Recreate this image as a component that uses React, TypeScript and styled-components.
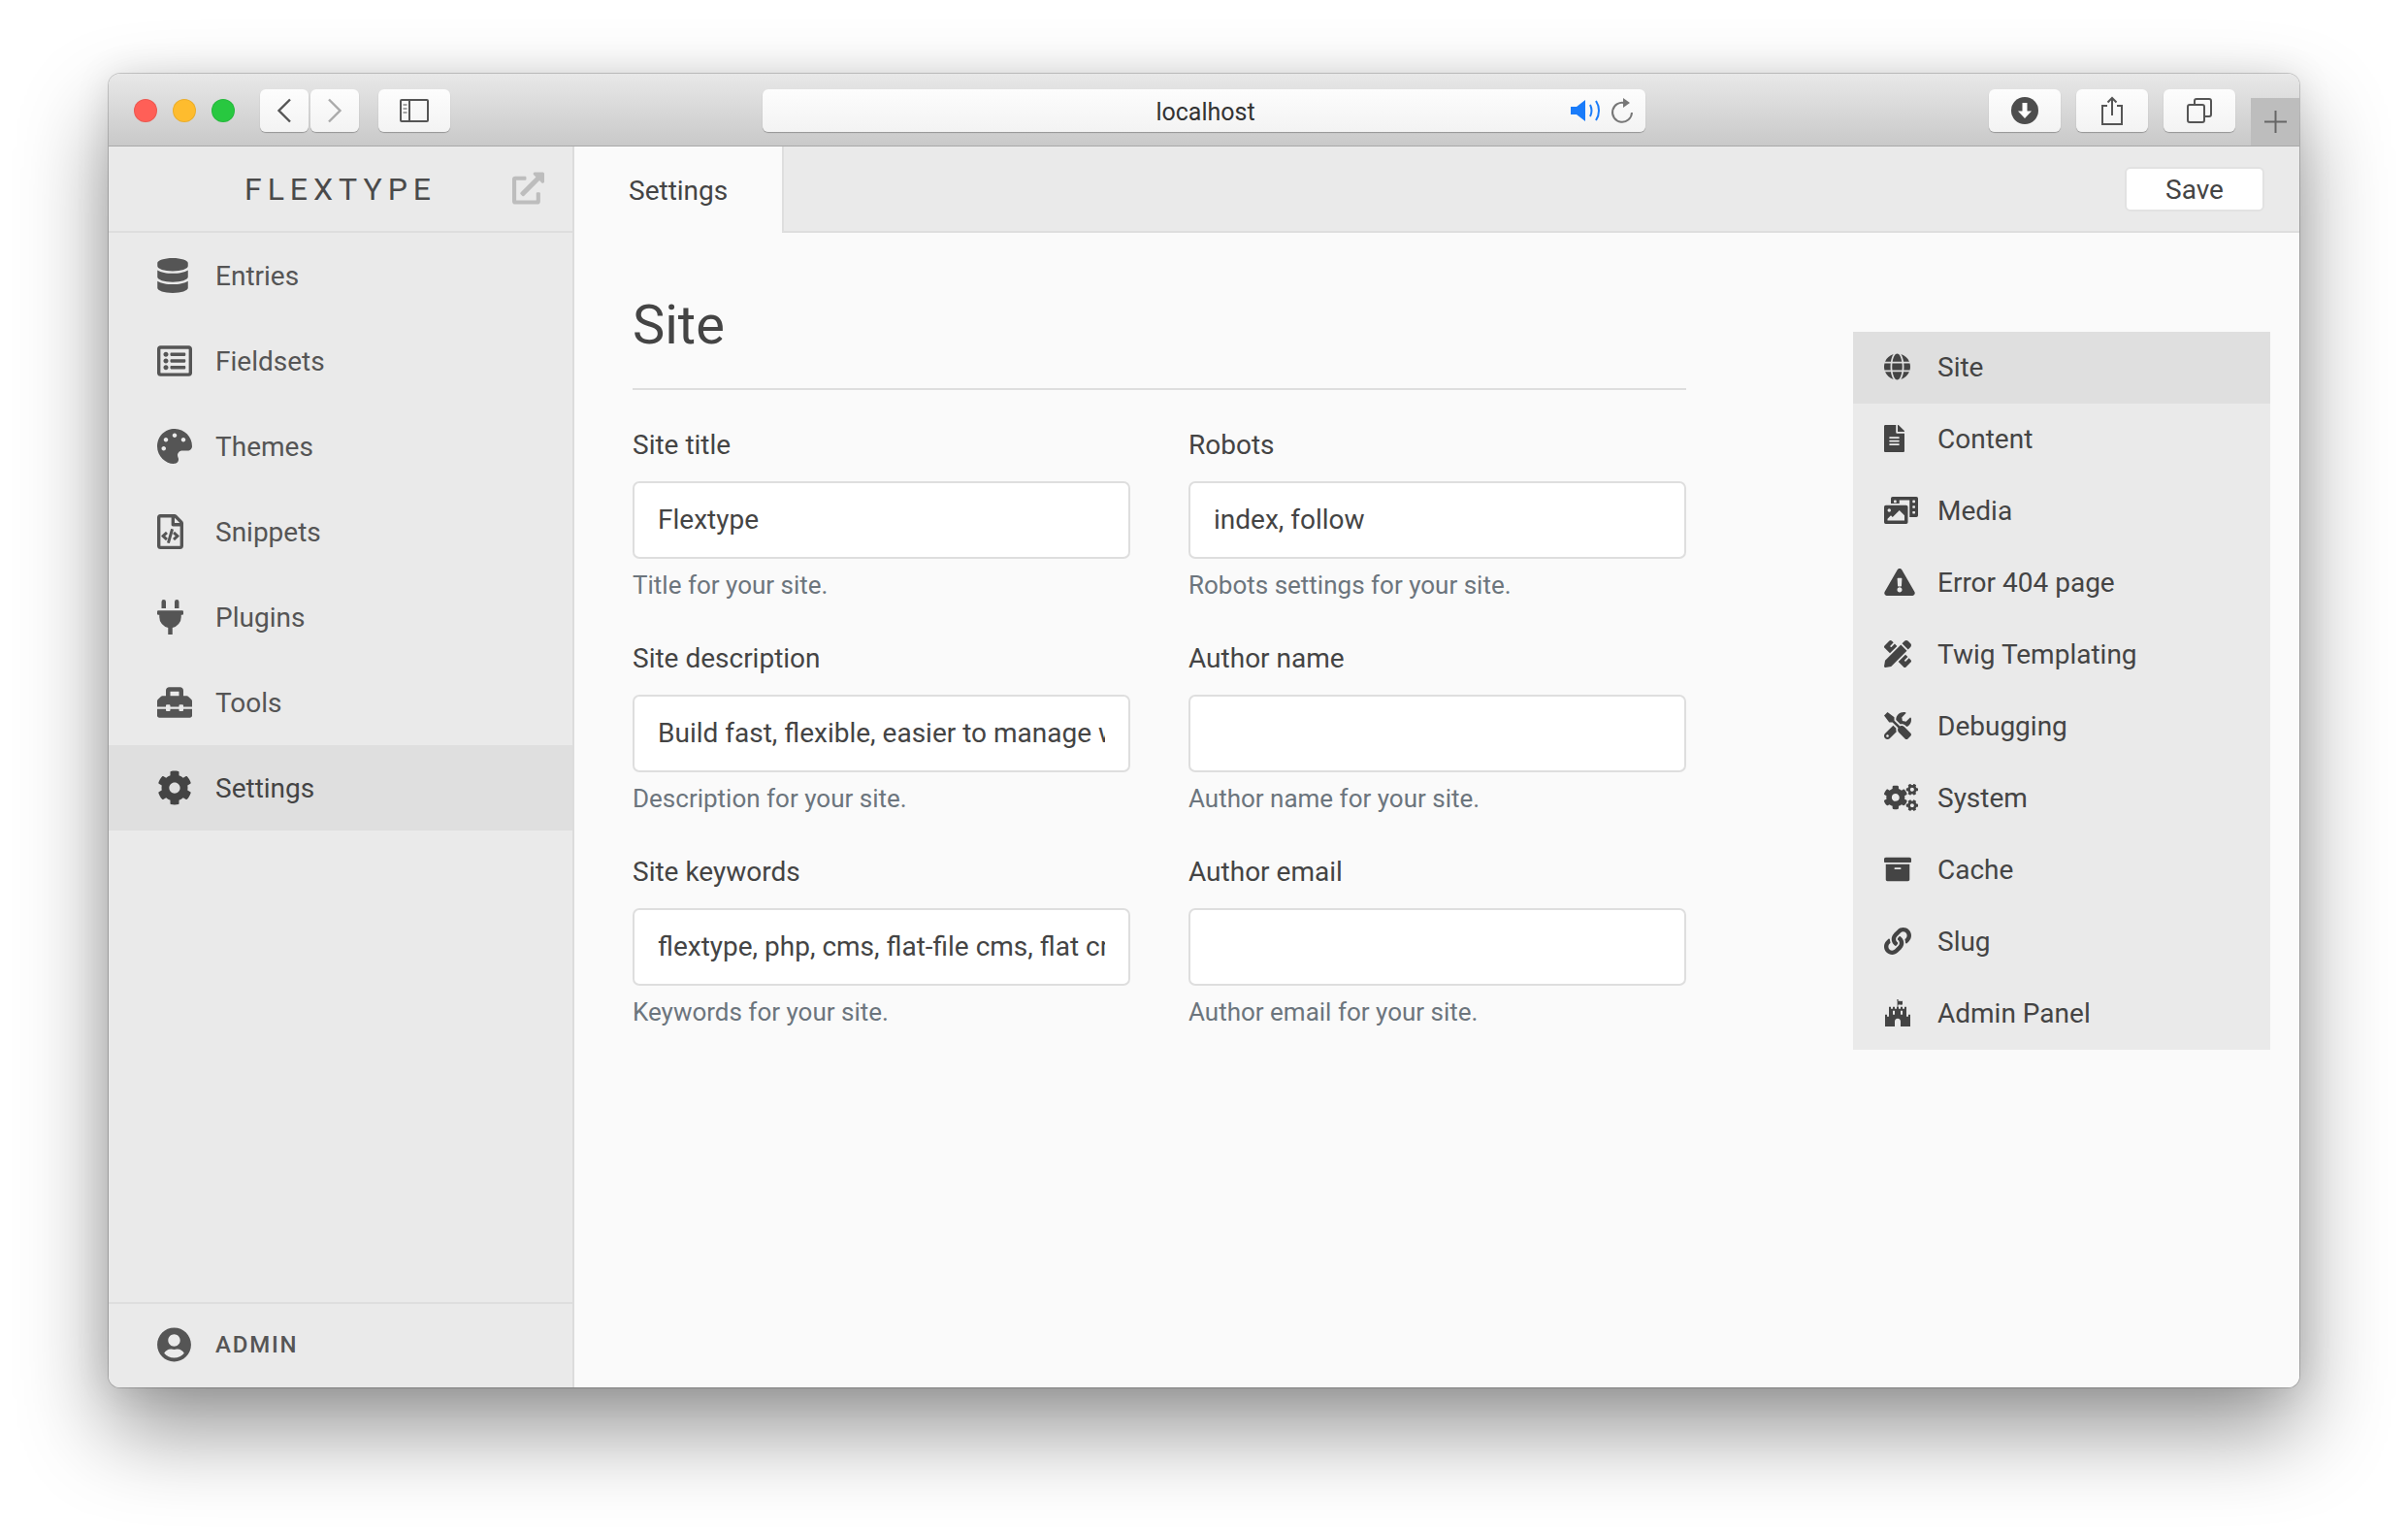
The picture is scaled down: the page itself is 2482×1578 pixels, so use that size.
import styled, { createGlobalStyle } from "styled-components";
import type { ReactNode } from "react";
import {
  FaArchive,
  FaCog,
  FaCogs,
  FaDatabase,
  FaExclamationTriangle,
  FaExternalLinkAlt,
  FaFileAlt,
  FaFortAwesome,
  FaGlobe,
  FaLink,
  FaPalette,
  FaPencilRuler,
  FaPhotoVideo,
  FaPlug,
  FaRegFileCode,
  FaRegListAlt,
  FaToolbox,
  FaTools,
  FaUserCircle,
} from "react-icons/fa";

const GlobalStyle = createGlobalStyle`
  html, body {
    margin: 0;
    padding: 0;
    background: #fff;
  }

  body {
    font-family: Roboto, "Liberation Sans", sans-serif;
  }
`;

// iconWidth: the glyphs are not square and sit flush left in their column
const sidebarItems = [
  { label: "Entries", icon: <FaDatabase />, iconWidth: 32 },
  { label: "Fieldsets", icon: <FaRegListAlt />, iconWidth: 36 },
  { label: "Themes", icon: <FaPalette />, iconWidth: 36 },
  { label: "Snippets", icon: <FaRegFileCode />, iconWidth: 27 },
  { label: "Plugins", icon: <FaPlug />, iconWidth: 27 },
  { label: "Tools", icon: <FaToolbox />, iconWidth: 36 },
  { label: "Settings", icon: <FaCog />, iconWidth: 36, active: true },
];

const sectionItems = [
  { label: "Site", icon: <FaGlobe />, iconWidth: 27, active: true },
  { label: "Content", icon: <FaFileAlt />, iconWidth: 21 },
  { label: "Media", icon: <FaPhotoVideo />, iconWidth: 35 },
  { label: "Error 404 page", icon: <FaExclamationTriangle />, iconWidth: 32 },
  { label: "Twig Templating", icon: <FaPencilRuler />, iconWidth: 28 },
  { label: "Debugging", icon: <FaTools />, iconWidth: 28 },
  { label: "System", icon: <FaCogs />, iconWidth: 35 },
  { label: "Cache", icon: <FaArchive />, iconWidth: 28 },
  { label: "Slug", icon: <FaLink />, iconWidth: 28 },
  { label: "Admin Panel", icon: <FaFortAwesome />, iconWidth: 28 },
];

const leftFields = [
  { label: "Site title", value: "Flextype", help: "Title for your site." },
  {
    label: "Site description",
    value: "Build fast, flexible, easier to manage websites with Flextype.",
    help: "Description for your site.",
  },
  {
    label: "Site keywords",
    value: "flextype, php, cms, flat-file cms, flat cms, flatfile cms, html",
    help: "Keywords for your site.",
  },
];

const rightFields = [
  { label: "Robots", value: "index, follow", help: "Robots settings for your site." },
  { label: "Author name", value: "", help: "Author name for your site." },
  { label: "Author email", value: "", help: "Author email for your site." },
];

function Field({ label, value, help }: { label: string; value: string; help: string }) {
  return (
    <FieldBox>
      <FieldLabel>{label}</FieldLabel>
      <TextInput readOnly value={value} />
      <HelpText>{help}</HelpText>
    </FieldBox>
  );
}

function ChromeButton({ width, children }: { width: number; children: ReactNode }) {
  return <ToolButton $width={width}>{children}</ToolButton>;
}

export default function App() {
  return (
    <>
      <GlobalStyle />
      <Page>
        <Window>
          <TitleBar>
            <Lights>
              <Light $color="#ff5f57" />
              <Light $color="#febc2e" />
              <Light $color="#28c840" />
            </Lights>
            <NavButtons>
              <ChromeButton width={50}>
                <svg width="16" height="26" viewBox="0 0 16 26" fill="none" stroke="#555" strokeWidth="2.4">
                  <path d="M14 1.5 2.5 13 14 24.5" />
                </svg>
              </ChromeButton>
              <ChromeButton width={50}>
                <svg width="16" height="26" viewBox="0 0 16 26" fill="none" stroke="#aaa" strokeWidth="2.4">
                  <path d="M2 1.5 13.5 13 2 24.5" />
                </svg>
              </ChromeButton>
            </NavButtons>
            <ChromeButton width={74}>
              <svg width="30" height="24" viewBox="0 0 30 24" fill="none" stroke="#555" strokeWidth="2">
                <rect x="1" y="1" width="28" height="22" rx="1" />
                <path d="M10 1v22" />
                <path d="M3.5 6h4M3.5 10h4M3.5 14h4" strokeWidth="1.6" stroke="#888" />
              </svg>
            </ChromeButton>
            <UrlBar>
              <UrlText>localhost</UrlText>
              <UrlIcons>
                <svg width="34" height="24" viewBox="0 0 34 24">
                  <path d="M0 8h6l9-7v22l-9-7H0z" fill="#1a7cfa" />
                  <path d="M20 6c2 4 2 8 0 12M26 2c4 6 4 14 0 20" fill="none" stroke="#1a7cfa" strokeWidth="2" />
                </svg>
                <svg width="24" height="28" viewBox="0 0 24 28" fill="none" stroke="#777" strokeWidth="2">
                  <path d="M15 6.2A10 10 0 1 0 22 16" />
                  <path d="M13 1v10l7-5z" fill="#777" stroke="none" />
                </svg>
              </UrlIcons>
            </UrlBar>
            <RightTools>
              <ChromeButton width={74}>
                <svg width="28" height="28" viewBox="0 0 28 28">
                  <circle cx="14" cy="14" r="14" fill="#4d4d4d" />
                  <path d="M11.5 6h5v8.5h4.5L14 22l-7-7.500h4.500z" fill="#fff" />
                </svg>
              </ChromeButton>
              <ChromeButton width={74}>
                <svg width="24" height="30" viewBox="0 0 24 30" fill="none" stroke="#555" strokeWidth="2">
                  <path d="M7 10H2v19h20V10h-5" />
                  <path d="M12 20V2M7.500 6.500 12 2l4.500 4.500" />
                </svg>
              </ChromeButton>
              <ChromeButton width={74}>
                <svg width="26" height="26" viewBox="0 0 26 26" fill="none" stroke="#555" strokeWidth="2">
                  <rect x="1" y="7" width="17" height="18" rx="2" />
                  <path d="M8 7V3a2 2 0 0 1 2-2h13a2 2 0 0 1 2 2v14a2 2 0 0 1-2 2h-5" />
                </svg>
              </ChromeButton>
            </RightTools>
            <NewTab>
              <svg width="23" height="23" viewBox="0 0 23 23" stroke="#666" strokeWidth="2">
                <path d="M11.500 0v23M0 11.500h23" />
              </svg>
            </NewTab>
          </TitleBar>
          <Body>
            <Sidebar>
              <Brand>
                <BrandName>FLEXTYPE</BrandName>
                <BrandLink>
                  <FaExternalLinkAlt />
                </BrandLink>
              </Brand>
              <SideNav>
                {sidebarItems.map((item) => (
                  <SideItem key={item.label} $active={item.active}>
                    <SideIcon $iconWidth={item.iconWidth}>{item.icon}</SideIcon>
                    {item.label}
                  </SideItem>
                ))}
              </SideNav>
              <SideFooter>
                <SideIcon $iconWidth={35}>
                  <FaUserCircle />
                </SideIcon>
                ADMIN
              </SideFooter>
            </Sidebar>
            <Main>
              <TabBar>
                <Tab>Settings</Tab>
                <SaveButton>Save</SaveButton>
              </TabBar>
              <Content>
                <FormArea>
                  <Heading>Site</Heading>
                  <FormGrid>
                    <FormColumn>
                      {leftFields.map((f) => (
                        <Field key={f.label} {...f} />
                      ))}
                    </FormColumn>
                    <FormColumn>
                      {rightFields.map((f) => (
                        <Field key={f.label} {...f} />
                      ))}
                    </FormColumn>
                  </FormGrid>
                </FormArea>
                <SectionNav>
                  {sectionItems.map((item) => (
                    <SectionItem key={item.label} $active={item.active}>
                      <SectionIcon $iconWidth={item.iconWidth}>{item.icon}</SectionIcon>
                      {item.label}
                    </SectionItem>
                  ))}
                </SectionNav>
              </Content>
            </Main>
          </Body>
        </Window>
      </Page>
    </>
  );
}

const Page = styled.div`
  width: 2482px;
  height: 1578px;
  padding: 76px 112px 148px;
  box-sizing: border-box;
  overflow: hidden;
  background: #fff;
`;

const Window = styled.div`
  height: 100%;
  display: flex;
  flex-direction: column;
  border-radius: 12px;
  overflow: hidden;
  box-shadow: 0 0 0 1px rgba(0, 0, 0, 0.18), 0 44px 90px rgba(0, 0, 0, 0.42), 0 0 36px rgba(0, 0, 0, 0.1);
`;

const TitleBar = styled.div`
  height: 75px;
  flex-shrink: 0;
  display: flex;
  align-items: flex-start;
  padding-top: 16px;
  padding-left: 26px;
  box-sizing: border-box;
  background: linear-gradient(#e8e8e8, #c9c9c9);
  border-bottom: 1px solid #a9a9a9;
`;

const Lights = styled.div`
  display: flex;
  gap: 16px;
  margin: 10px 26px 0 0;
`;

const Light = styled.span<{ $color: string }>`
  width: 24px;
  height: 24px;
  border-radius: 50%;
  background: ${(p) => p.$color};
  box-shadow: inset 0 0 0 1px rgba(0, 0, 0, 0.08);
`;

const NavButtons = styled.div`
  display: flex;
  gap: 2px;
  margin-right: 20px;
`;

const ToolButton = styled.div<{ $width: number }>`
  width: ${(p) => p.$width}px;
  height: 44px;
  display: flex;
  align-items: center;
  justify-content: center;
  background: linear-gradient(#fdfdfd, #f3f3f3);
  border-radius: 6px;
  box-shadow: 0 1px 1px rgba(0, 0, 0, 0.28);
`;

const UrlBar = styled.div`
  width: 910px;
  height: 44px;
  margin-left: 322px;
  position: relative;
  display: flex;
  align-items: center;
  justify-content: center;
  background: linear-gradient(#fdfdfd, #f3f3f3);
  border-radius: 6px;
  box-shadow: 0 1px 1px rgba(0, 0, 0, 0.28);
`;

const UrlText = styled.span`
  font-size: 25px;
  color: #333;
  margin: 2px 0 0 3px;
`;

const UrlIcons = styled.div`
  position: absolute;
  right: 12px;
  top: 8px;
  display: flex;
  align-items: center;
  gap: 7px;
`;

const RightTools = styled.div`
  display: flex;
  gap: 16px;
  margin-left: 354px;
`;

const NewTab = styled.div`
  width: 50px;
  height: 49px;
  margin: 9px 0 0 16px;
  display: flex;
  align-items: center;
  justify-content: center;
  background: #bdbdbd;
`;

const Body = styled.div`
  flex: 1;
  min-height: 0;
  display: flex;
`;

const Sidebar = styled.aside`
  width: 480px;
  flex-shrink: 0;
  display: flex;
  flex-direction: column;
  box-sizing: border-box;
  background: #eaeaea;
  border-right: 2px solid #dcdcdc;
`;

const Brand = styled.div`
  height: 89px;
  flex-shrink: 0;
  position: relative;
  display: flex;
  align-items: center;
  justify-content: center;
  box-sizing: border-box;
  border-bottom: 2px solid #dedede;
`;

const BrandName = styled.div`
  font-size: 32px;
  font-weight: 400;
  letter-spacing: 6px;
  color: #4a4a4a;
  margin-top: 0;
`;

const BrandLink = styled.div`
  position: absolute;
  right: 29px;
  top: 26px;
  color: #bdbdbd;
  display: flex;

  svg {
    width: 33px;
    height: 34px;
  }
`;

const SideNav = styled.nav`
  flex: 1;
`;

const SideItem = styled.div<{ $active?: boolean }>`
  height: 88px;
  display: flex;
  align-items: center;
  padding-left: 50px;
  font-size: 28px;
  color: ${(p) => (p.$active ? "#444" : "#555")};
  background: ${(p) => (p.$active ? "#dfdfdf" : "transparent")};
`;

const SideIcon = styled.span<{ $iconWidth: number }>`
  width: 60px;
  flex-shrink: 0;
  display: flex;
  align-items: center;

  svg {
    width: ${(p) => p.$iconWidth}px;
    height: 36px;
  }
`;

const SideFooter = styled.div`
  height: 88px;
  flex-shrink: 0;
  display: flex;
  align-items: center;
  padding: 0 0 3px 50px;
  box-sizing: border-box;
  border-top: 2px solid #dedede;
  font-size: 24px;
  font-weight: 500;
  letter-spacing: 1.8px;
  color: #555;
`;

const Main = styled.main`
  flex: 1;
  min-width: 0;
  display: flex;
  flex-direction: column;
  background: #fafafa;
`;

const TabBar = styled.div`
  height: 89px;
  flex-shrink: 0;
  display: flex;
  align-items: flex-start;
  justify-content: space-between;
  padding-right: 36px;
  box-sizing: border-box;
  background: #eaeaea;
  border-bottom: 2px solid #dedede;
`;

const Tab = styled.div`
  width: 216px;
  height: 89px;
  padding: 2px 0 0 56px;
  box-sizing: border-box;
  display: flex;
  align-items: center;
  font-size: 28px;
  color: #444;
  background: #fafafa;
  border-right: 2px solid #dedede;
`;

const SaveButton = styled.button`
  width: 144px;
  height: 46px;
  margin-top: 21px;
  padding: 0;
  font-family: inherit;
  font-size: 28px;
  color: #444;
  background: #fff;
  border: 2px solid #e2e2e2;
  border-radius: 6px;
`;

const Content = styled.div`
  flex: 1;
  display: flex;
  align-items: flex-start;
  justify-content: space-between;
  padding: 0 30px 0 60px;
`;

const FormArea = styled.div`
  width: 1086px;
`;

const Heading = styled.h1`
  margin: 63px 0 36px;
  padding-bottom: 33px;
  font-size: 56px;
  line-height: 64px;
  font-weight: 400;
  color: #444;
  border-bottom: 2px solid #dedede;
`;

const FormGrid = styled.div`
  display: grid;
  grid-template-columns: 513px 513px;
  column-gap: 60px;
`;

const FormColumn = styled.div`
  display: flex;
  flex-direction: column;
`;

const FieldBox = styled.div`
  height: 220px;
`;

const FieldLabel = styled.div`
  font-size: 28px;
  line-height: 42px;
  color: #444;
  margin-bottom: 16px;
`;

const TextInput = styled.input`
  display: block;
  width: 100%;
  height: 80px;
  padding: 0 24px 1px;
  box-sizing: border-box;
  font-family: inherit;
  font-size: 28px;
  color: #444;
  background: #fff;
  border: 2px solid #dedede;
  border-radius: 7px;
  outline: none;
`;

const HelpText = styled.div`
  margin-top: 9px;
  font-size: 26px;
  line-height: 36px;
  color: #6c757d;
`;

const SectionNav = styled.nav`
  width: 430px;
  margin-top: 102px;
  background: #eaeaea;
`;

const SectionItem = styled.div<{ $active?: boolean }>`
  height: 74px;
  display: flex;
  align-items: center;
  padding: 0 0 2px 32px;
  box-sizing: border-box;
  font-size: 28px;
  color: #444;
  background: ${(p) => (p.$active ? "#dfdfdf" : "transparent")};
`;

const SectionIcon = styled.span<{ $iconWidth: number }>`
  width: 55px;
  flex-shrink: 0;
  display: flex;
  align-items: center;

  svg {
    width: ${(p) => p.$iconWidth}px;
    height: 28px;
  }
`;
